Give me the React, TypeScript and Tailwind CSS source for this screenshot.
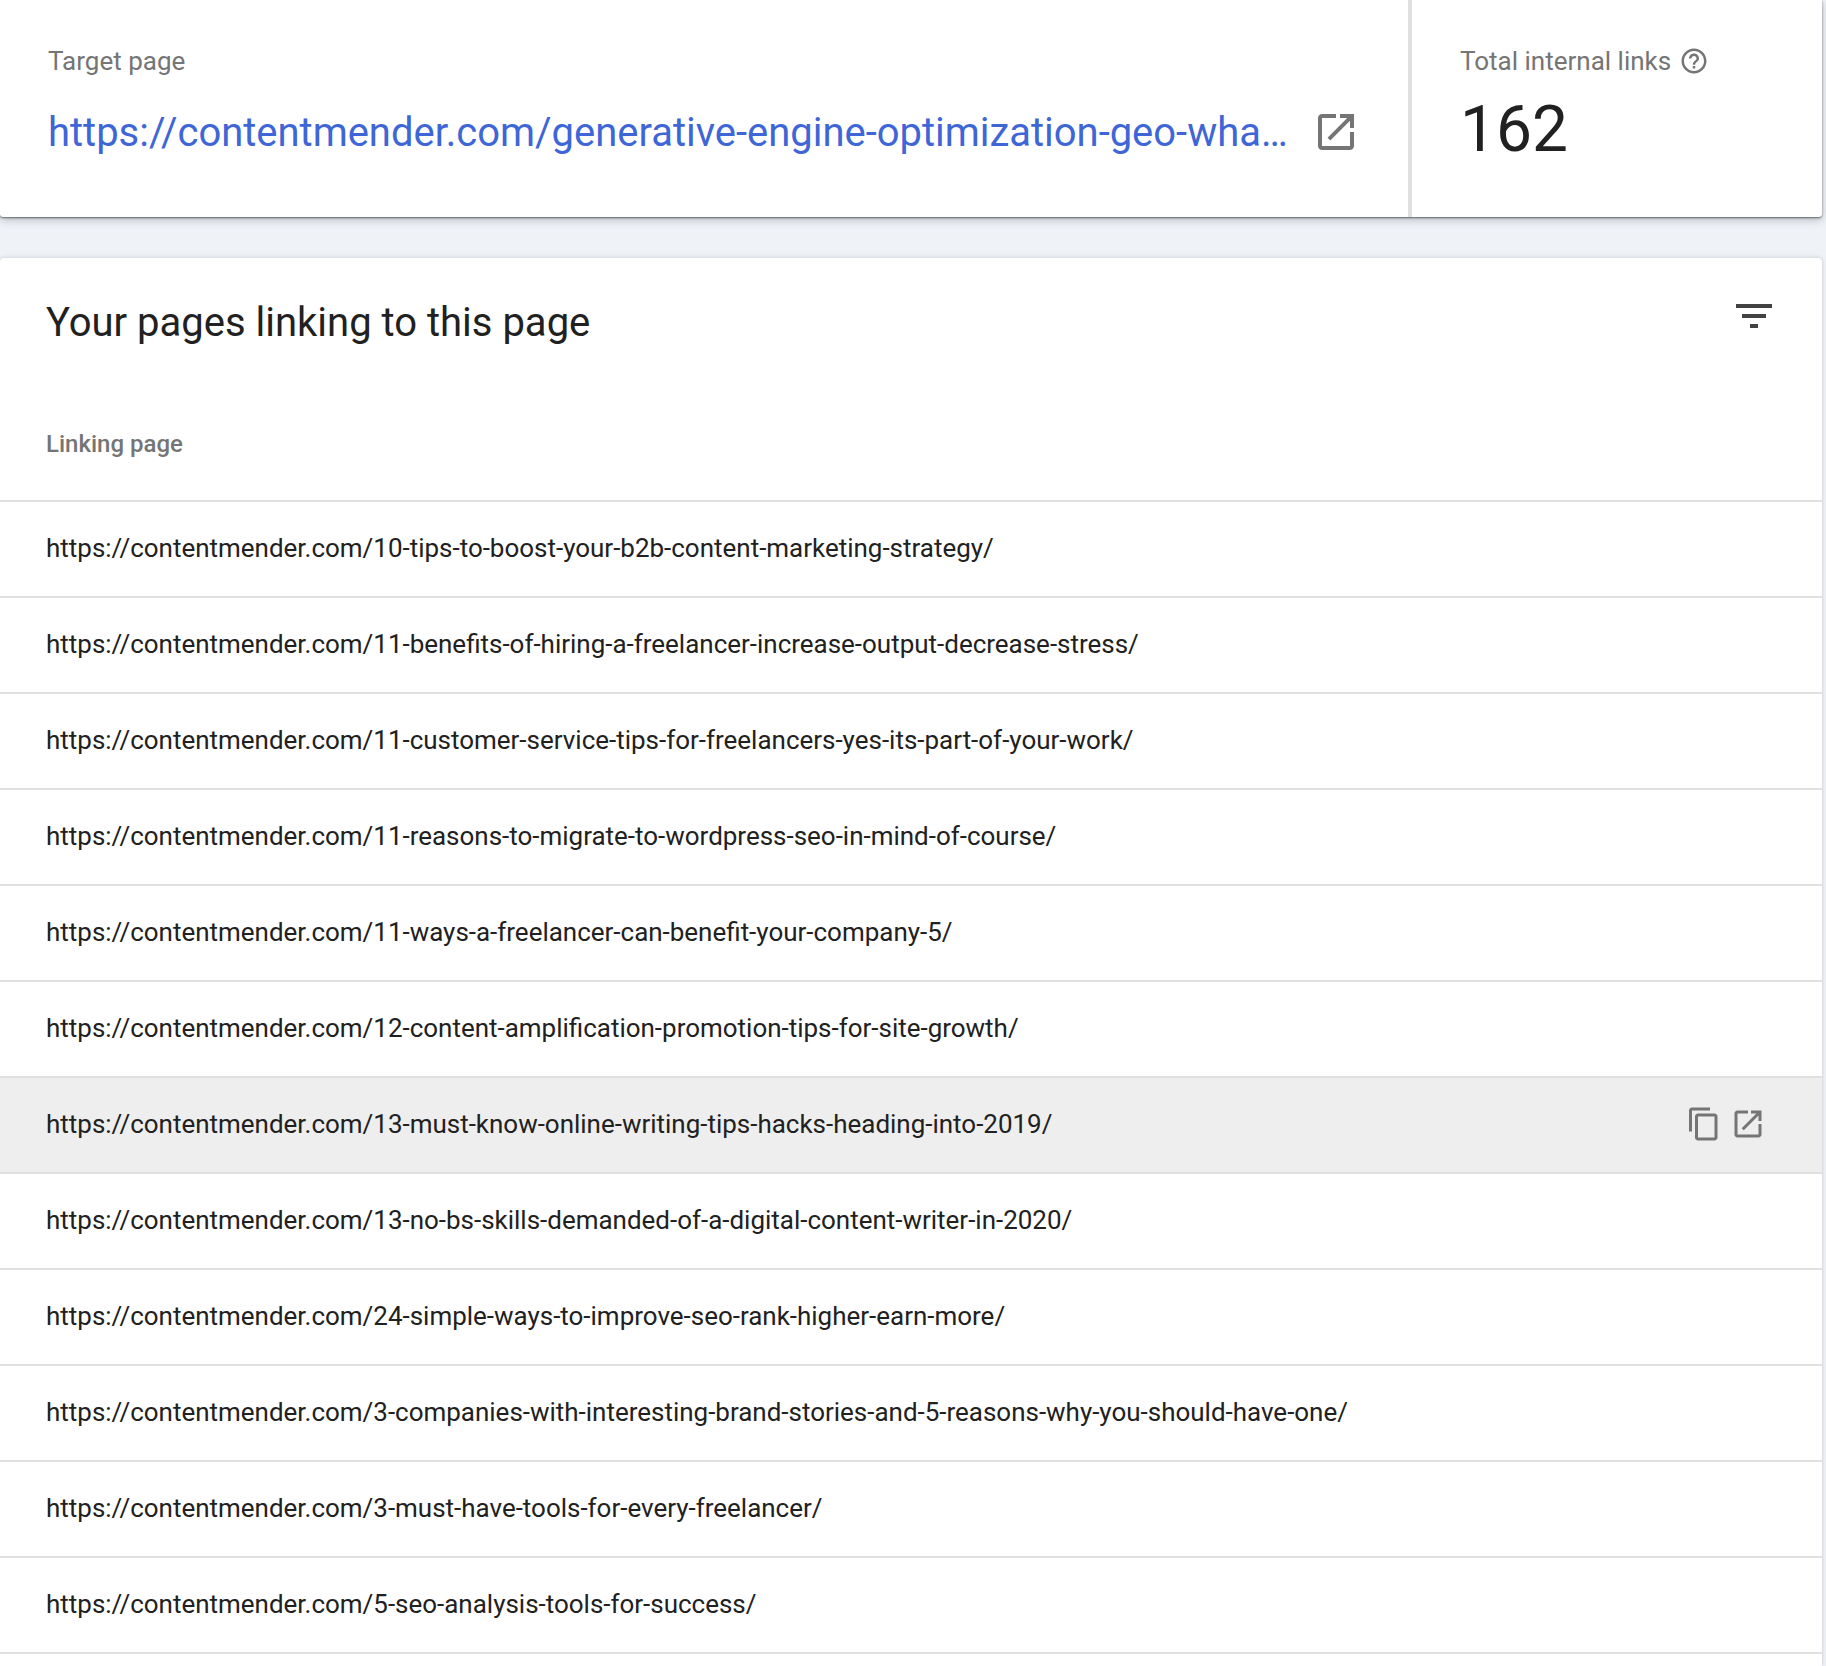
import React from "react"

const links = [
  "10-tips-to-boost-your-b2b-content-marketing-strategy/",
  "11-benefits-of-hiring-a-freelancer-increase-output-decrease-stress/",
  "11-customer-service-tips-for-freelancers-yes-its-part-of-your-work/",
  "11-reasons-to-migrate-to-wordpress-seo-in-mind-of-course/",
  "11-ways-a-freelancer-can-benefit-your-company-5/",
  "12-content-amplification-promotion-tips-for-site-growth/",
  "13-must-know-online-writing-tips-hacks-heading-into-2019/",
  "13-no-bs-skills-demanded-of-a-digital-content-writer-in-2020/",
  "24-simple-ways-to-improve-seo-rank-higher-earn-more/",
  "3-companies-with-interesting-brand-stories-and-5-reasons-why-you-should-have-one/",
  "3-must-have-tools-for-every-freelancer/",
  "5-seo-analysis-tools-for-success/",
]

function OpenIcon({ className }: { className: string }) {
  return (
    <svg viewBox="0 0 24 24" fill="currentColor" className={className}>
      <path d="M19 19H5V5h7V3H5c-1.11 0-2 .9-2 2v14c0 1.1.89 2 2 2h14c1.1 0 2-.9 2-2v-7h-2v7zM14 3v2h3.59l-9.83 9.83 1.41 1.41L19 6.41V10h2V3h-7z" />
    </svg>
  )
}

function CopyIcon({ className }: { className: string }) {
  return (
    <svg viewBox="0 0 24 24" fill="currentColor" className={className}>
      <path d="M16 1H4c-1.1 0-2 .9-2 2v14h2V3h12V1zm3 4H8c-1.1 0-2 .9-2 2v14c0 1.1.9 2 2 2h11c1.1 0 2-.9 2-2V7c0-1.1-.9-2-2-2zm0 16H8V7h11v14z" />
    </svg>
  )
}

function FilterIcon({ className }: { className: string }) {
  return (
    <svg viewBox="0 0 24 24" fill="currentColor" className={className}>
      <path d="M10 18h4v-2h-4v2zM3 6v2h18V6H3zm3 7h12v-2H6v2z" />
    </svg>
  )
}

function HelpIcon({ className }: { className: string }) {
  return (
    <svg viewBox="0 0 24 24" fill="currentColor" className={className}>
      <path d="M11 18h2v-2h-2v2zm1-16C6.48 2 2 6.48 2 12s4.48 10 10 10 10-4.48 10-10S17.52 2 12 2zm0 18c-4.41 0-8-3.59-8-8s3.59-8 8-8 8 3.59 8 8-3.59 8-8 8zm0-14c-2.21 0-4 1.79-4 4h2c0-1.1.9-2 2-2s2 .9 2 2c0 2-3 1.75-3 5h2c0-2.25 3-2.5 3-5 0-2.21-1.79-4-4-4z" />
    </svg>
  )
}

export default function App() {
  return (
    <div className="flex h-[1666px] flex-col overflow-hidden bg-[#eff3f8] pr-1 font-['Roboto',sans-serif] text-[#212121]">
      <div className="flex h-[217px] shrink-0 rounded-b-[3px] bg-white shadow-[0_1px_2px_rgba(0,0,0,0.5),0_3px_8px_rgba(60,64,67,0.3)]">
        <div className="flex w-[1408px] shrink-0 flex-col pt-[45px] pl-12">
          <div className="text-[26px] leading-[32px] text-[#757575]">Target page</div>
          <div className="mt-[31px] flex items-center">
            <div className="w-[1243px] truncate pt-[1px] text-[39.96px] leading-[48px] text-[#3e66d7]">
              https://contentmender.com/generative-engine-optimization-geo-what-it-is-and-why-it-matters/
            </div>
            <OpenIcon className="ml-[21px] -mt-[1px] h-12 w-12 shrink-0 text-[#757575]" />
          </div>
        </div>
        <div className="flex-1 border-l-[4px] border-[#e0e0e0] pt-[45px] pl-12">
          <div className="flex items-center gap-[8px] text-[26px] leading-[32px] text-[#757575]">
            Total internal links
            <HelpIcon className="h-[30px] w-[30px]" />
          </div>
          <div className="mt-[15px] text-[64px] leading-[76px]">162</div>
        </div>
      </div>

      <div className="mt-[41px] flex-1 overflow-hidden rounded-t-[4px] bg-white shadow-[0_0_4px_rgba(60,64,67,0.25)]">
        <div className="flex h-[128px] items-start justify-between pr-11">
          <div className="pt-[41px] pl-[46px] text-[40px] leading-[48px]">Your pages linking to this page</div>
          <FilterIcon className="mt-[34px] h-12 w-12 text-[#424242]" />
        </div>
        <div className="flex h-[116px] items-start border-b-2 border-[#e0e0e0] pt-[42px] pl-[46px] text-[24px] leading-[32px] font-medium text-[#757575]">
          Linking page
        </div>
        {links.map((link, i) => (
          <div
            key={link}
            className={`flex h-[96px] items-center justify-between border-b-2 border-[#e0e0e0] pr-[56px] pb-[1px] pl-[46px] text-[25.97px] ${i === 6 ? "bg-[#eeeeee]" : ""}`}
          >
            <span>https://contentmender.com/{link}</span>
            {i === 6 && (
              <span className="-mt-[1px] flex gap-2 text-[#757575]">
                <CopyIcon className="h-9 w-9" />
                <OpenIcon className="h-9 w-9" />
              </span>
            )}
          </div>
        ))}
      </div>
    </div>
  )
}
